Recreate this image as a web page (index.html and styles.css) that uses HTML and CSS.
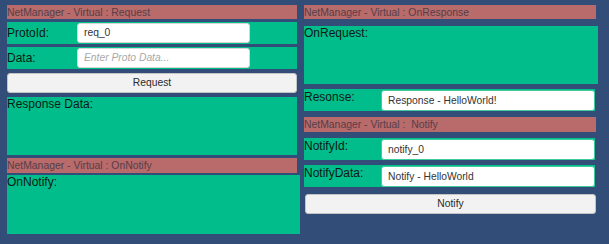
FILE: index.html
```html
<!DOCTYPE html>
<html>
<head>
<meta charset="utf-8">
<link rel="stylesheet" href="styles.css">
</head>
<body>
<div class="page">
  <div class="col left">
    <div class="hdr">NetManager - Virtual : Request</div>
    <div class="row r-proto">
      <span class="lbl lbl-mid">ProtoId:</span>
      <div class="input">req_0</div>
    </div>
    <div class="row r-data">
      <span class="lbl lbl-mid">Data:</span>
      <div class="input ph">Enter Proto Data...</div>
    </div>
    <div class="btn b-req">Request</div>
    <div class="box b-resp">Response Data:</div>
    <div class="hdr h-notify">NetManager - Virtual : OnNotify</div>
    <div class="box b-onnotify">OnNotify:</div>
  </div>
  <div class="col right">
    <div class="hdr">NetManager - Virtual : OnResponse</div>
    <div class="box b-onreq">OnRequest:</div>
    <div class="row r-resonse">
      <span class="lbl lbl-top">Resonse:</span>
      <div class="input wide">Response - HelloWorld!</div>
    </div>
    <div class="hdr h-n2">NetManager - Virtual :&nbsp; Notify</div>
    <div class="row r-nid">
      <span class="lbl lbl-top">NotifyId:</span>
      <div class="input wide">notify_0</div>
    </div>
    <div class="row r-ndata">
      <span class="lbl lbl-top">NotifyData:</span>
      <div class="input wide">Notify - HelloWorld</div>
    </div>
    <div class="btn b-notify">Notify</div>
  </div>
</div>
</body>
</html>
```
FILE: styles.css
```css
html, body {
  margin: 0;
  padding: 0;
  background: #334d79;
  width: 609px;
  height: 244px;
  overflow: hidden;
  font-family: "Liberation Sans", Arial, sans-serif;
}
.page {
  display: flex;
  padding: 5px 0 0 7px;
}
.col {
  display: flex;
  flex-direction: column;
}
.left { width: 293px; }
.right { width: 294px; margin-left: 4px; }

.hdr {
  background: #b96a6b;
  color: #553f47;
  font-size: 10.4px;
  height: 14px;
  line-height: 15px;
  white-space: nowrap;
  width: 290px;
  box-sizing: border-box;
}
.right .hdr { width: 292px; }

.row {
  background: #00bd8b;
  height: 22px;
  display: flex;
  align-items: center;
  width: 290px;
  box-sizing: border-box;
}
.right .row { width: 291px; align-items: stretch; }

.lbl {
  color: #0c1a14;
  font-size: 12px;
  white-space: nowrap;
}
.lbl-mid { width: 70px; }
.lbl-top { width: 77px; line-height: 14px; padding-top: 1px; }

.input {
  background: #fff;
  border-radius: 3px;
  border: 1px solid #d6d6d6;
  box-sizing: border-box;
  width: 173px;
  height: 20px;
  font-size: 10.3px;
  line-height: 18px;
  padding-left: 6px;
  color: #333;
}
.input.ph {
  color: #a9a9a9;
  font-style: italic;
}
.input.wide {
  width: 214px;
  height: 21px;
  margin-top: 1px;
  line-height: 19px;
  border-color: #3ccc9e;
}

.r-proto { margin-top: 3px; }
.r-data { margin-top: 3px; }

.btn {
  background: #f2f2f2;
  border: 1px solid #c4c4c4;
  border-radius: 3px;
  box-sizing: border-box;
  height: 20px;
  width: 290px;
  text-align: center;
  font-size: 10.3px;
  line-height: 18px;
  color: #2a2a2a;
}
.b-req { margin-top: 4px; }

.box {
  background: #00bd8b;
  color: #0c1a14;
  font-size: 12px;
  line-height: 13px;
  padding-top: 1px;
  box-sizing: border-box;
  white-space: nowrap;
}
.b-resp { margin-top: 4px; height: 58px; width: 290px; }
.h-notify { margin-top: 3px; height: 15px; }
.b-onnotify { margin-top: 2px; height: 59px; width: 293px; }

.b-onreq { margin-top: 7px; height: 58px; width: 294px; }
.r-resonse { margin-top: 5px; }
.h-n2 { margin-top: 6px; height: 15px; }
.r-nid { margin-top: 6px; }
.r-ndata { margin-top: 5px; }
.b-notify { margin-top: 7px; width: 291px; margin-left: 1px; }
```
